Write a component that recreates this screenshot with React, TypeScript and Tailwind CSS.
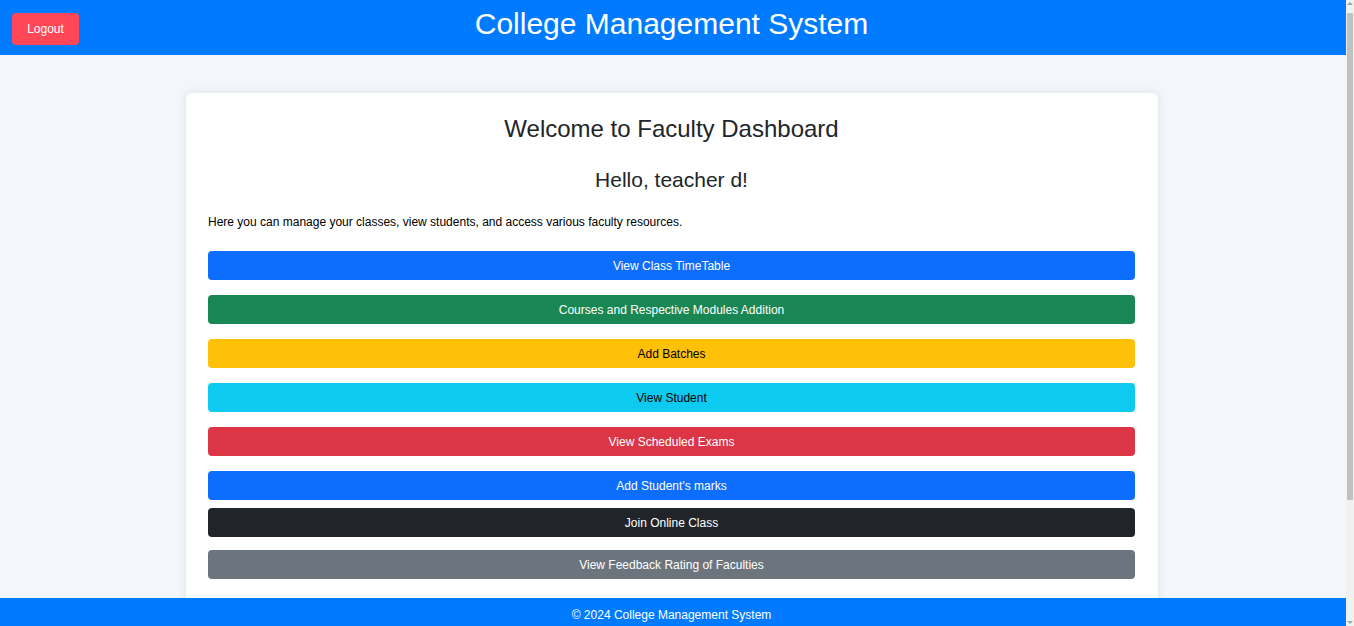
export default function App() {
  const buttons = [
    { label: "View Class TimeTable", cls: "bg-[#0d6efd] text-white", mt: "mt-0" },
    { label: "Courses and Respective Modules Addition", cls: "bg-[#198754] text-white", mt: "mt-[15px]" },
    { label: "Add Batches", cls: "bg-[#ffc107] text-black", mt: "mt-[15px]" },
    { label: "View Student", cls: "bg-[#0dcaf0] text-black", mt: "mt-[15px]" },
    { label: "View Scheduled Exams", cls: "bg-[#dc3545] text-white", mt: "mt-[15px]" },
    { label: "Add Student's marks", cls: "bg-[#0d6efd] text-white", mt: "mt-[15px]" },
    { label: "Join Online Class", cls: "bg-[#212529] text-white", mt: "mt-[8px]" },
    { label: "View Feedback Rating of Faculties", cls: "bg-[#6c757d] text-white", mt: "mt-[13px]" },
  ];

  return (
    <div className="flex h-[626px] overflow-hidden bg-[#f3f6fa] font-['Liberation_Sans',Arial,sans-serif]">
      <div className="relative flex-1">
        <header className="relative flex h-[55px] items-center justify-center bg-[#007bff]">
          <button className="absolute left-[12px] top-[13px] h-[32px] w-[67px] rounded-[4px] bg-[#ff4757] text-[12px] text-white">
            Logout
          </button>
          <h1 className="-mt-[8px] mr-[3px] text-[30px] leading-none text-white">College Management System</h1>
        </header>

        <main className="pt-[38px] pr-[2px]">
          <div className="mx-auto w-[972px] rounded-[6px] bg-white pl-[22px] pr-[23px] pt-[21px] pb-[60px] shadow-[0_0_10px_rgba(0,0,0,0.1)]">
            <h2 className="text-center text-[24px] leading-[29px] text-[#212529]">
              Welcome to Faculty Dashboard
            </h2>
            <h3 className="mt-[24px] text-center text-[21px] leading-[25px] text-[#212529]">
              Hello, teacher d!
            </h3>
            <p className="mt-[23px] text-[12px] leading-[14px] text-black">
              Here you can manage your classes, view students, and access various faculty resources.
            </p>
            <div className="mt-[22px] flex flex-col">
              {buttons.map((b) => (
                <button
                  key={b.label}
                  className={`${b.mt} h-[29px] w-full rounded-[4px] text-[12px] ${b.cls}`}
                >
                  {b.label}
                </button>
              ))}
            </div>
          </div>
        </main>

        <footer className="absolute bottom-0 left-0 right-0 flex h-[28px] items-center justify-center bg-[#007bff] pt-[5px] pr-[3px] text-[12px] text-white">
          © 2024 College Management System
        </footer>
      </div>

      {/* scrollbar strip */}
      <div className="flex w-[8px] flex-col items-center bg-[#f1f1f1] py-[2px]">
        <div className="h-0 w-0 border-x-[3px] border-b-[3px] border-x-transparent border-b-[#a3a3a3]" />
        <div className="mt-[8px] h-[487px] w-[6px] bg-[#c1c1c1]" />
        <div className="flex-1" />
        <div className="h-0 w-0 border-x-[3px] border-t-[3px] border-x-transparent border-t-[#a3a3a3]" />
      </div>
    </div>
  );
}
